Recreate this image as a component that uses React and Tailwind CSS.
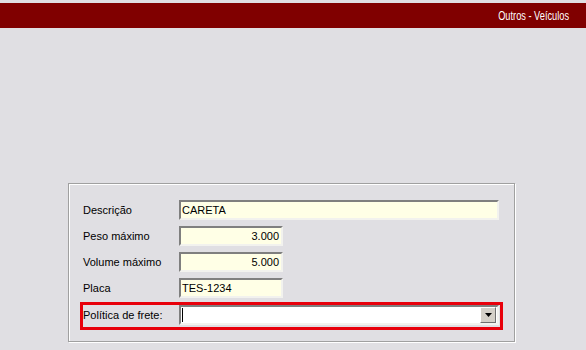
import React from "react";

const font = { fontFamily: '"Liberation Sans", Arial, sans-serif' };

function Field({ value = "", right = false, wide = false }) {
  return (
    <div
      className={`h-[20px] ${wide ? "w-[320px]" : "w-[104px]"} bg-[#ffffe6] border-2 border-t-[#7f7f7f] border-l-[#7f7f7f] border-b-[#f2f2ee] border-r-[#f2f2ee] flex items-center px-[1px] text-[11px] text-black ${right ? "justify-end pr-[2px]" : ""}`}
    >
      {value}
    </div>
  );
}

function Row({ label, children }) {
  return (
    <div className="flex items-center h-[20px]">
      <div className="w-[96px] text-[11px] text-black">{label}</div>
      {children}
    </div>
  );
}

export default function App() {
  return (
    <div className="w-[586px] h-[350px] bg-[#e0dfe3] overflow-hidden pt-[3px]" style={font}>
      <div className="h-[25px] bg-[#800000] flex items-center justify-end pr-[17px]">
        <span className="text-white text-[12px] scale-x-[0.77] origin-right inline-block whitespace-nowrap">
          Outros - Veículos
        </span>
      </div>

      <div className="mt-[155px] ml-[68px] w-[447px] h-[159px] border border-[#a0a0a0] shadow-[inset_1px_1px_0_#ffffff,1px_1px_0_#ffffff] pt-[16px] pl-[14px] flex flex-col gap-[6px]">
        <Row label="Descrição">
          <Field value="CARETA" wide />
        </Row>
        <Row label="Peso máximo">
          <Field value="3.000" right />
        </Row>
        <Row label="Volume máximo">
          <Field value="5.000" right />
        </Row>
        <Row label="Placa">
          <Field value="TES-1234" />
        </Row>

        <div className="-ml-[3px] mt-[-2px] w-[423px] border-[3px] border-[#e8000b] pb-[2px] flex items-center">
          <div className="w-[96px] text-[11px] text-black">Política de frete:</div>
          <div className="h-[20px] w-[320px] bg-white border-2 border-t-[#7f7f7f] border-l-[#7f7f7f] border-b-[#f2f2ee] border-r-[#f2f2ee] flex items-center justify-between pl-[1px] pr-[1px]">
            <div className="w-[1px] h-[14px] bg-black" />
            <div className="w-[16px] h-[16px] bg-[#d4d0c8] border border-t-[#ffffff] border-l-[#ffffff] border-b-[#6f6f6f] border-r-[#6f6f6f] flex items-center justify-center">
              <svg width="7" height="4" viewBox="0 0 7 4">
                <polygon points="0,0 7,0 3.5,4" fill="#000" />
              </svg>
            </div>
          </div>
        </div>
      </div>
    </div>
  );
}
